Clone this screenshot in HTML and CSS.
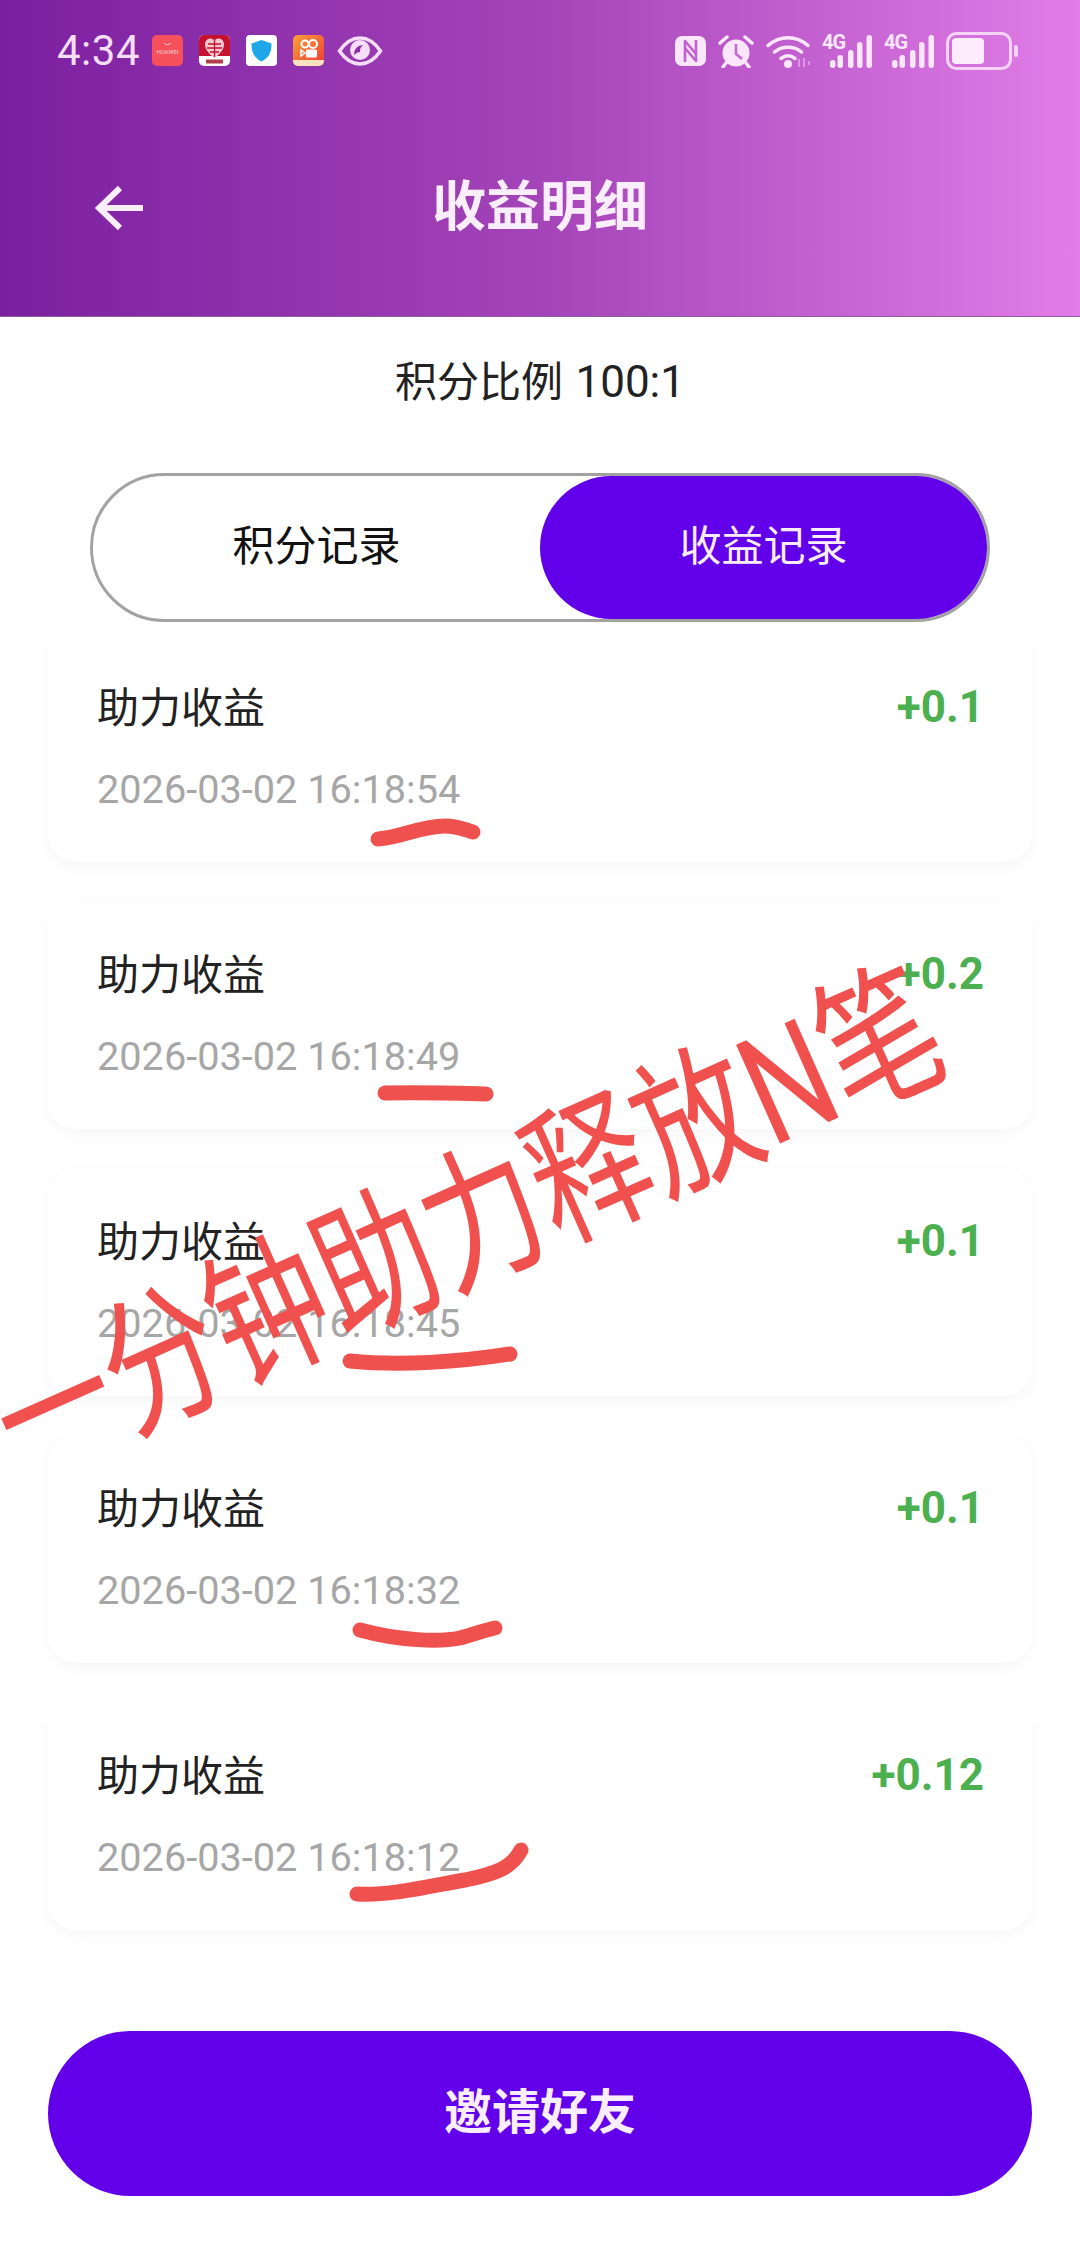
FILE: index.html
```html
<!DOCTYPE html>
<html>
<head>
    <title>收益明细</title>
    <link rel="stylesheet" href="styles.css">
</head>
<body>
    <div class="page">
        <div class="header">
            <div class="status-bar">
                <span class="time">4:34</span>
                <div class="app-icons">
                    <svg class="app-icon" viewBox="0 0 31 31"><rect width="31" height="31" rx="5" fill="#f5505c"/><path d="M12 8q3.500 3.500 7 0" fill="none" stroke="#fbd0d0" stroke-width="1"/><text x="15.500" y="19" text-anchor="middle" class="huawei-text">HUAWEI</text></svg>
                    <svg class="app-icon" viewBox="0 0 31 31"><rect width="31" height="31" rx="5" fill="#fff"/><path d="M0 5a5 5 0 0 1 5-5h21a5 5 0 0 1 5 5v16H0z" fill="#c4122f"/><path d="M15.500 23C9 18 6 14 6 9.500 6 5.500 9 3.500 11.500 3.500c2 0 3.300 1 4 2.500.7-1.500 2-2.500 4-2.500 2.500 0 5.500 2 5.500 6 0 4.500-3 8.500-9.500 13.500z" fill="#f6c9cf"/><path d="M15.500 5v17M9 9h13M8 13h15M11 17h9" stroke="#c4122f" stroke-width="1.300"/><rect x="7" y="24.500" width="17" height="4" fill="#b0404a"/></svg>
                    <svg class="app-icon" viewBox="0 0 31 31"><rect width="31" height="31" rx="4" fill="#fff"/><path d="M15.500 5l10 3.500c0 9-2.500 14-10 18-7.500-4-10-9-10-18z" fill="#1ea7e8"/></svg>
                    <svg class="app-icon" viewBox="0 0 31 31"><defs><linearGradient id="ks" x1="0" y1="0" x2="1" y2="1"><stop offset="0" stop-color="#f9a13a"/><stop offset="1" stop-color="#ee3a35"/></linearGradient></defs><rect width="31" height="31" rx="5" fill="url(#ks)"/><circle cx="12" cy="9" r="3.500" fill="none" stroke="#fff" stroke-width="2"/><circle cx="20" cy="9" r="4" fill="none" stroke="#fff" stroke-width="2"/><rect x="13" y="14.500" width="11" height="8" rx="1.500" fill="#fff"/><path d="M8 15l4 3-4 3z" fill="none" stroke="#fff" stroke-width="1.500"/><path d="M0 25h31v1a5 5 0 0 1-5 5H5a5 5 0 0 1-5-5z" fill="#fbe3c0"/></svg>
                    <svg class="eye-icon" viewBox="0 0 46 32"><path d="M2.500 16C9 6.500 15.500 3 23 3s14 3.500 20.500 13C37 25.500 30.500 29 23 29S9 25.500 2.500 16z" fill="none" stroke="#f6def9" stroke-width="3.500"/><circle cx="23" cy="15" r="10" fill="#f6def9"/><path d="M14 17a9 9 0 0 1 9-10 8 8 0 0 0-3 7c-2 0-4 1-6 3z" fill="#8e2ca8" transform="translate(3 3)"/></svg>
                </div>
                <div class="sys-icons">
                    <svg class="nfc-icon" viewBox="0 0 31 32"><rect x="0" y="1" width="31" height="30" rx="7" fill="#fbe6fc"/><path d="M10 27V6L21 19M21 5v21L10 13" fill="none" stroke="#bf62cf" stroke-width="2.600" stroke-linejoin="round"/></svg>
                    <svg class="alarm-icon" viewBox="0 0 36 34"><circle cx="18" cy="19" r="13.500" fill="#fbe6fc"/><path d="M18 10v10l6 5" fill="none" stroke="#c468d3" stroke-width="2.600"/><path d="M2 9l7-6M34 9l-7-6" stroke="#fbe6fc" stroke-width="3.500" stroke-linecap="round"/><path d="M8 29l-3 4M28 29l3 4" stroke="#fbe6fc" stroke-width="3.500" stroke-linecap="round"/></svg>
                    <svg class="wifi-icon" viewBox="0 0 46 34"><path d="M2 11.500C14 1 30 1 42 11.500M8.500 18C16 11.500 28 11.500 35.500 18M15 24.500c4.500-3.500 9.500-3.500 14 0" fill="none" stroke="#fbe6fc" stroke-width="3.500" stroke-linecap="round"/><circle cx="22" cy="30" r="4" fill="#fbe6fc"/><path d="M33 25v8M38 24v9M43 27v4" stroke="#e7a9ec" stroke-width="1.500"/></svg>
                    <div class="signal">
                        <span class="net-label">4G</span>
                        <svg class="signal-bars" viewBox="0 0 50 34"><rect x="8" y="26" width="5.500" height="8" rx="2.700" fill="#fbe6fc"/><rect x="15.500" y="21" width="5.500" height="13" rx="2.700" fill="#fbe6fc"/><rect x="26" y="16" width="5.500" height="18" rx="2.700" fill="#fbe6fc"/><rect x="35" y="8" width="5.500" height="26" rx="2.700" fill="#fbe6fc"/><rect x="44.500" y="1" width="5.500" height="33" rx="2.700" fill="#fbe6fc"/></svg>
                    </div>
                    <div class="signal">
                        <span class="net-label">4G</span>
                        <svg class="signal-bars" viewBox="0 0 50 34"><rect x="8" y="26" width="5.500" height="8" rx="2.700" fill="#fbe6fc"/><rect x="15.500" y="21" width="5.500" height="13" rx="2.700" fill="#fbe6fc"/><rect x="26" y="16" width="5.500" height="18" rx="2.700" fill="#fbe6fc"/><rect x="35" y="8" width="5.500" height="26" rx="2.700" fill="#fbe6fc"/><rect x="44.500" y="1" width="5.500" height="33" rx="2.700" fill="#fbe6fc"/></svg>
                    </div>
                    <svg class="battery-icon" viewBox="0 0 72 38"><rect x="1.500" y="1.500" width="63" height="35" rx="9" fill="none" stroke="#f5d3f6" stroke-width="3"/><rect x="6" y="6" width="32" height="26" rx="4" fill="#fcecfd"/><rect x="68" y="13" width="4" height="12" rx="2" fill="#f5d3f6"/></svg>
                </div>
            </div>
            <div class="title-bar">
                <svg class="back-icon" viewBox="0 0 50 46"><path d="M48 23H5M25 3L4 23l21 20" fill="none" stroke="#fbeefc" stroke-width="6"/></svg>
                <h1 class="title">收益明细</h1>
            </div>
        </div>

        <div class="ratio">积分比例 <span class="ratio-num">100:1</span></div>

        <div class="tabs">
            <div class="tab">积分记录</div>
            <div class="tab tab-active">收益记录</div>
        </div>

        <div class="list">
            <div class="card card-first">
                <div class="card-row">
                    <span class="card-name">助力收益</span>
                    <span class="card-amount">+0.1</span>
                </div>
                <div class="card-date">2026-03-02 16:18:54</div>
            </div>
            <div class="card">
                <div class="card-row">
                    <span class="card-name">助力收益</span>
                    <span class="card-amount">+0.2</span>
                </div>
                <div class="card-date">2026-03-02 16:18:49</div>
            </div>
            <div class="card">
                <div class="card-row">
                    <span class="card-name">助力收益</span>
                    <span class="card-amount">+0.1</span>
                </div>
                <div class="card-date">2026-03-02 16:18:45</div>
            </div>
            <div class="card">
                <div class="card-row">
                    <span class="card-name">助力收益</span>
                    <span class="card-amount">+0.1</span>
                </div>
                <div class="card-date">2026-03-02 16:18:32</div>
            </div>
            <div class="card">
                <div class="card-row">
                    <span class="card-name">助力收益</span>
                    <span class="card-amount">+0.12</span>
                </div>
                <div class="card-date">2026-03-02 16:18:12</div>
            </div>
        </div>

        <button class="invite-btn">邀请好友</button>

        <!-- red pen marks drawn over the screenshot -->
        <svg class="pen-marks" viewBox="0 0 1080 2244">
            <path d="M378 839C400 838 420 826 445 826C458 826 465 830 473 832"/>
            <path d="M385 1093C420 1092 450 1093 486 1094"/>
            <path d="M350 1361C400 1366 460 1362 510 1354"/>
            <path d="M360 1630C400 1641 440 1642 460 1638C475 1634 485 1630 495 1628"/>
            <path d="M357 1894C390 1896 430 1886 465 1880C495 1874 512 1868 521 1850"/>
        </svg>
        <div class="pen-text">一分钟助力释放N笔</div>
    </div>
</body>
</html>
```

FILE: styles.css
```css
* {
    box-sizing: border-box;
}
body {
    margin: 0;
    font-family: Roboto, "Noto Sans CJK SC", sans-serif;
    background-color: #fff;
}
.page {
    position: relative;
    width: 1080px;
    height: 2244px;
    overflow: hidden;
    display: flex;
    flex-direction: column;
}

/* header */
.header {
    height: 317px;
    background: linear-gradient(90deg, #7a1fa0 0%, #a444b8 50%, #e27de8 100%);
    border-bottom: 1px solid #8a5a9a;
    padding-top: 32px;
}
.status-bar {
    display: flex;
    align-items: center;
    height: 37px;
    padding-left: 57px;
}
.time {
    width: 95px;
    font-size: 42px;
    color: #f6def9;
    letter-spacing: 0.5px;
}
.app-icons {
    display: flex;
    align-items: center;
    gap: 16px;
}
.app-icon {
    width: 31px;
    height: 31px;
}
.huawei-text {
    font-size: 6px;
    fill: #fbd0d0;
}
.eye-icon {
    width: 46px;
    height: 32px;
    margin-left: -3px;
}
.sys-icons {
    display: flex;
    align-items: center;
    margin-left: auto;
    padding-right: 62px;
}
.nfc-icon {
    width: 31px;
    height: 32px;
    margin-right: 12px;
}
.alarm-icon {
    width: 36px;
    height: 34px;
    margin-right: 12px;
}
.wifi-icon {
    width: 46px;
    height: 34px;
    margin-right: 10px;
}
.signal {
    position: relative;
    width: 50px;
    height: 34px;
    margin-right: 12px;
}
.signal-bars {
    width: 50px;
    height: 34px;
}
.net-label {
    position: absolute;
    left: 0;
    top: -2px;
    font-size: 20px;
    font-weight: 700;
    line-height: 20px;
    letter-spacing: -1px;
    color: #fbe6fc;
}
.battery-icon {
    width: 72px;
    height: 38px;
}
.title-bar {
    position: relative;
    display: flex;
    justify-content: center;
    align-items: center;
    height: 75px;
    margin-top: 96px;
}
.back-icon {
    position: absolute;
    left: 95px;
    top: 20px;
    width: 50px;
    height: 46px;
}
.title {
    margin: 0;
    font-size: 54px;
    font-weight: 700;
    color: #fbeefc;
}

/* ratio and tabs */
.ratio {
    margin-top: 35px;
    text-align: center;
    font-size: 42px;
    line-height: 60px;
    color: #222;
}
.ratio-num {
    font-size: 44px;
    margin-left: 2px;
}
.tabs {
    display: flex;
    width: 900px;
    height: 149px;
    margin: 60px 0 0 90px;
    border: 3px solid #a2a2a2;
    border-radius: 75px;
}
.tab {
    flex: 1;
    display: flex;
    justify-content: center;
    align-items: center;
    padding-bottom: 10px;
    font-size: 42px;
    color: #111;
}
.tab-active {
    background-color: #6200ea;
    border-radius: 72px;
    color: #fbeefc;
}

/* records */
.list {
    height: 1410px;
    margin-top: 18px;
    padding: 0 48px;
    overflow: hidden;
}
.card {
    height: 228px;
    margin-bottom: 39px;
    padding: 40px 50px 0 49px;
    background-color: #fff;
    border-radius: 28px;
    box-shadow: 0 5px 16px rgba(0,0,0,0.04);
}
.card-first {
    height: 222px;
    padding-top: 34px;
    border-radius: 0 0 28px 28px;
}
.card-row {
    display: flex;
    justify-content: space-between;
    align-items: center;
    height: 60px;
}
.card-name {
    font-size: 42px;
    color: #222;
}
.card-amount {
    margin-right: -2px;
    padding-top: 6px;
    font-size: 44px;
    font-weight: 700;
    color: #4caf50;
}
.card-date {
    margin-top: 32px;
    font-size: 39.7px;
    line-height: 48px;
    color: #a6a6a6;
}
.invite-btn {
    position: absolute;
    left: 48px;
    top: 2031px;
    width: 984px;
    height: 165px;
    padding-bottom: 12px;
    border: none;
    border-radius: 83px;
    background-color: #6200ea;
    color: #fbeefc;
    font-family: inherit;
    font-size: 48px;
    font-weight: 700;
}

/* pen marks */
.pen-marks {
    position: absolute;
    left: 0;
    top: 0;
    width: 1080px;
    height: 2244px;
}
.pen-marks path {
    fill: none;
    stroke: #ef524e;
    stroke-width: 15;
    stroke-linecap: round;
    stroke-linejoin: round;
}
.pen-text {
    position: absolute;
    left: 2px;
    top: 1358px;
    font-size: 117px;
    line-height: 150px;
    white-space: nowrap;
    color: #f0514e;
    transform: rotate(-24deg) scale(1, 1.3);
    transform-origin: left center;
}
```
